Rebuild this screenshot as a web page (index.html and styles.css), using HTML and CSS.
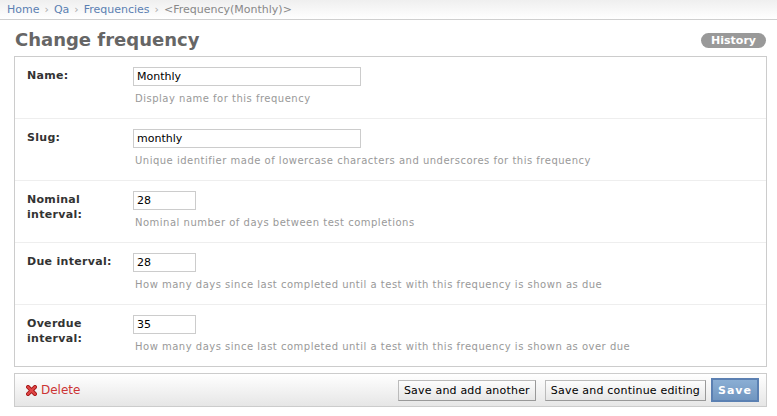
FILE: index.html
```html
<!DOCTYPE html>
<html>
<head>
<meta charset="utf-8">
<link rel="stylesheet" href="styles.css">
</head>
<body>
<div class="breadcrumbs">
  <a href="#">Home</a><span class="sep">›</span><a href="#">Qa</a><span class="sep">›</span><a href="#">Frequencies</a><span class="sep">›</span><span class="current">&lt;Frequency(Monthly)&gt;</span>
</div>
<div class="content">
  <div class="header">
    <h1>Change frequency</h1>
    <a class="history" href="#">History</a>
  </div>
  <form>
    <div class="fieldset">
      <div class="row">
        <label class="label">Name:</label>
        <div class="field">
          <input class="text wide" type="text" value="Monthly">
          <p class="help">Display name for this frequency</p>
        </div>
      </div>
      <div class="row">
        <label class="label">Slug:</label>
        <div class="field">
          <input class="text wide" type="text" value="monthly">
          <p class="help">Unique identifier made of lowercase characters and underscores for this frequency</p>
        </div>
      </div>
      <div class="row">
        <label class="label">Nominal interval:</label>
        <div class="field">
          <input class="text small" type="text" value="28">
          <p class="help">Nominal number of days between test completions</p>
        </div>
      </div>
      <div class="row">
        <label class="label">Due interval:</label>
        <div class="field">
          <input class="text small" type="text" value="28">
          <p class="help">How many days since last completed until a test with this frequency is shown as due</p>
        </div>
      </div>
      <div class="row">
        <label class="label">Overdue interval:</label>
        <div class="field">
          <input class="text small" type="text" value="35">
          <p class="help">How many days since last completed until a test with this frequency is shown as over due</p>
        </div>
      </div>
    </div>
    <div class="submit-row">
      <a class="deletelink" href="#"><svg class="del-icon" width="11" height="11" viewBox="0 0 11 11"><path d="M2 2 L9 9 M9 2 L2 9" stroke="#a31a1a" stroke-width="4" stroke-linecap="square"/><path d="M2 2 L9 9 M9 2 L2 9" stroke="#e04646" stroke-width="2.2" stroke-linecap="square"/></svg>Delete</a>
      <div class="buttons">
        <button type="button" class="btn">Save and add another</button>
        <button type="button" class="btn">Save and continue editing</button>
        <button type="button" class="btn default">Save</button>
      </div>
    </div>
  </form>
</div>
</body>
</html>
```

FILE: styles.css
```css
html, body {
  margin: 0;
  padding: 0;
  background: #fff;
}
body {
  font-family: "DejaVu Sans", Verdana, sans-serif;
  font-size: 11px;
  color: #333;
}
a {
  text-decoration: none;
}
.breadcrumbs {
  height: 19px;
  line-height: 19px;
  padding: 0 7px;
  border-bottom: 1px solid #cfcfcf;
  background: linear-gradient(#efefef, #fff);
  color: #888;
  font-size: 11px;
  white-space: nowrap;
}
.breadcrumbs a {
  color: #5b80b2;
}
.breadcrumbs .sep {
  color: #aaa;
  margin: 0 5px;
}
.breadcrumbs .current {
  color: #888;
}
.content {
  padding: 9px 10px 0 14px;
}
.header {
  display: flex;
  justify-content: space-between;
  align-items: center;
  margin-bottom: 5px;
}
h1 {
  margin: 0;
  padding-left: 1px;
  font-size: 18px;
  line-height: 22px;
  font-weight: bold;
  color: #666;
}
.history {
  display: block;
  height: 15px;
  line-height: 15px;
  padding: 0 10px;
  margin-right: 1px;
  border-radius: 8px;
  background: #999;
  color: #fff;
  font-weight: bold;
  font-size: 11px;
}
.fieldset {
  border: 1px solid #ccc;
}
.row {
  display: flex;
  padding: 10px 12px 12px 12px;
  border-bottom: 1px solid #eee;
}
.row:last-child {
  border-bottom: none;
}
.label {
  flex: 0 0 96px;
  padding-right: 10px;
  padding-top: 1px;
  font-weight: bold;
  font-size: 11px;
  line-height: 15px;
  letter-spacing: 0.3px;
  color: #333;
}
.field {
  flex: 1;
}
.text {
  display: block;
  box-sizing: border-box;
  height: 19px;
  margin: 0;
  padding: 1px 3px;
  border: 1px solid #ccc;
  font-family: "DejaVu Sans", Verdana, sans-serif;
  font-size: 11px;
  color: #000;
  background: #fff;
}
.wide {
  width: 228px;
}
.small {
  width: 63px;
}
.help {
  margin: 6px 0 0 2px;
  font-size: 10px;
  line-height: 14px;
  letter-spacing: 0.5px;
  color: #999;
}
.submit-row {
  display: flex;
  justify-content: space-between;
  align-items: center;
  margin-top: 6px;
  height: 32px;
  padding: 0 7px 0 11px;
  border: 1px solid #ccc;
  background: linear-gradient(#fff, #e6e6e6);
}
.deletelink {
  display: flex;
  align-items: center;
  color: #cc3434;
  font-size: 12px;
}
.del-icon {
  margin-right: 4px;
}
.buttons {
  display: flex;
  align-items: center;
}
.btn {
  height: 21px;
  margin: 0 0 0 9px;
  padding: 0 5px;
  border: 1px solid #bbb;
  border-right-color: #999;
  border-bottom-color: #999;
  background: linear-gradient(#fdfdfd, #e6e6e6);
  font-family: "DejaVu Sans", Verdana, sans-serif;
  font-size: 11px;
  color: #000;
  letter-spacing: 0.2px;
}
.btn + .btn {
  margin-left: 9px;
}
.btn.default {
  margin-left: 5px;
  height: 24px;
  padding: 0 5px;
  border: 2px solid #5b80b2;
  background: linear-gradient(#8aaed4, #7196c0);
  color: #fff;
  font-weight: bold;
  letter-spacing: 1px;
}
```
